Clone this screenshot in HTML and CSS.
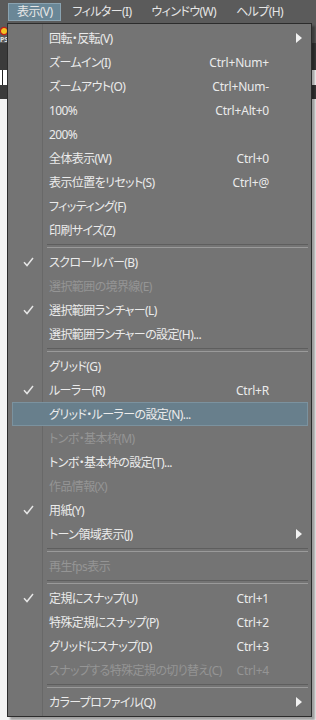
FILE: index.html
```html
<!DOCTYPE html>
<html lang="ja">
<head>
<meta charset="utf-8">
<title>表示メニュー</title>
<link rel="stylesheet" href="styles.css">
</head>
<body>
<div class="app">
  <div class="menubar">
    <div class="mb-item active">表示(V)</div>
    <div class="mb-item">フィルター(I)</div>
    <div class="mb-item">ウィンドウ(W)</div>
    <div class="mb-item">ヘルプ(H)</div>
  </div>
  <div class="workspace">
    <div class="toolstrip">
      <svg class="tool-icon" width="9" height="10" viewBox="0 0 9 10"><circle cx="4" cy="5" r="3.6" fill="#f3c322" stroke="#c0201a" stroke-width="1.2"/></svg>
      <span class="tool-label">PS</span>
    </div>
    <div class="band dark"></div>
    <div class="band white"><span class="vline"></span></div>
    <div class="band dark tall"></div>
    <div class="band rest"></div>
  </div>

  <div class="menu">
    <div class="row"><span class="chk"></span><span class="lbl">回転・反転(V)</span><span class="key"></span><span class="sub"><svg width="6" height="10" viewBox="0 0 6 10"><path d="M0 0 L6 5 L0 10 Z" fill="#f2f2f2"/></svg></span></div>
    <div class="row"><span class="chk"></span><span class="lbl">ズームイン(I)</span><span class="key">Ctrl+Num+</span><span class="sub"></span></div>
    <div class="row"><span class="chk"></span><span class="lbl">ズームアウト(O)</span><span class="key">Ctrl+Num-</span><span class="sub"></span></div>
    <div class="row"><span class="chk"></span><span class="lbl">100%</span><span class="key">Ctrl+Alt+0</span><span class="sub"></span></div>
    <div class="row"><span class="chk"></span><span class="lbl">200%</span><span class="key"></span><span class="sub"></span></div>
    <div class="row"><span class="chk"></span><span class="lbl">全体表示(W)</span><span class="key">Ctrl+0</span><span class="sub"></span></div>
    <div class="row"><span class="chk"></span><span class="lbl">表示位置をリセット(S)</span><span class="key">Ctrl+@</span><span class="sub"></span></div>
    <div class="row"><span class="chk"></span><span class="lbl">フィッティング(F)</span><span class="key"></span><span class="sub"></span></div>
    <div class="row"><span class="chk"></span><span class="lbl">印刷サイズ(Z)</span><span class="key"></span><span class="sub"></span></div>
    <div class="sep"></div>
    <div class="row"><span class="chk"><svg width="11" height="10" viewBox="0 0 11 10"><path d="M1 5.2 L4 8.5 L10 1" fill="none" stroke="#e6e6e6" stroke-width="1.5"/></svg></span><span class="lbl">スクロールバー(B)</span><span class="key"></span><span class="sub"></span></div>
    <div class="row off"><span class="chk"></span><span class="lbl">選択範囲の境界線(E)</span><span class="key"></span><span class="sub"></span></div>
    <div class="row"><span class="chk"><svg width="11" height="10" viewBox="0 0 11 10"><path d="M1 5.2 L4 8.5 L10 1" fill="none" stroke="#e6e6e6" stroke-width="1.5"/></svg></span><span class="lbl">選択範囲ランチャー(L)</span><span class="key"></span><span class="sub"></span></div>
    <div class="row"><span class="chk"></span><span class="lbl">選択範囲ランチャーの設定(H)...</span><span class="key"></span><span class="sub"></span></div>
    <div class="sep"></div>
    <div class="row"><span class="chk"></span><span class="lbl">グリッド(G)</span><span class="key"></span><span class="sub"></span></div>
    <div class="row"><span class="chk"><svg width="11" height="10" viewBox="0 0 11 10"><path d="M1 5.2 L4 8.5 L10 1" fill="none" stroke="#e6e6e6" stroke-width="1.5"/></svg></span><span class="lbl">ルーラー(R)</span><span class="key">Ctrl+R</span><span class="sub"></span></div>
    <div class="row hot"><span class="chk"></span><span class="lbl">グリッド・ルーラーの設定(N)...</span><span class="key"></span><span class="sub"></span></div>
    <div class="row off"><span class="chk"></span><span class="lbl">トンボ・基本枠(M)</span><span class="key"></span><span class="sub"></span></div>
    <div class="row"><span class="chk"></span><span class="lbl">トンボ・基本枠の設定(T)...</span><span class="key"></span><span class="sub"></span></div>
    <div class="row off"><span class="chk"></span><span class="lbl">作品情報(X)</span><span class="key"></span><span class="sub"></span></div>
    <div class="row"><span class="chk"><svg width="11" height="10" viewBox="0 0 11 10"><path d="M1 5.2 L4 8.5 L10 1" fill="none" stroke="#e6e6e6" stroke-width="1.5"/></svg></span><span class="lbl">用紙(Y)</span><span class="key"></span><span class="sub"></span></div>
    <div class="row"><span class="chk"></span><span class="lbl">トーン領域表示(J)</span><span class="key"></span><span class="sub"><svg width="6" height="10" viewBox="0 0 6 10"><path d="M0 0 L6 5 L0 10 Z" fill="#f2f2f2"/></svg></span></div>
    <div class="sep"></div>
    <div class="row off"><span class="chk"></span><span class="lbl">再生fps表示</span><span class="key"></span><span class="sub"></span></div>
    <div class="sep"></div>
    <div class="row"><span class="chk"><svg width="11" height="10" viewBox="0 0 11 10"><path d="M1 5.2 L4 8.5 L10 1" fill="none" stroke="#e6e6e6" stroke-width="1.5"/></svg></span><span class="lbl">定規にスナップ(U)</span><span class="key">Ctrl+1</span><span class="sub"></span></div>
    <div class="row"><span class="chk"></span><span class="lbl">特殊定規にスナップ(P)</span><span class="key">Ctrl+2</span><span class="sub"></span></div>
    <div class="row"><span class="chk"></span><span class="lbl">グリッドにスナップ(D)</span><span class="key">Ctrl+3</span><span class="sub"></span></div>
    <div class="row off"><span class="chk"></span><span class="lbl">スナップする特殊定規の切り替え(C)</span><span class="key">Ctrl+4</span><span class="sub"></span></div>
    <div class="sep"></div>
    <div class="row"><span class="chk"></span><span class="lbl">カラープロファイル(Q)</span><span class="key"></span><span class="sub"><svg width="6" height="10" viewBox="0 0 6 10"><path d="M0 0 L6 5 L0 10 Z" fill="#f2f2f2"/></svg></span></div>
  </div>
</div>
</body>
</html>
```
FILE: styles.css
```css
* { box-sizing: border-box; }
html, body { margin: 0; padding: 0; }
body {
  width: 316px;
  height: 720px;
  overflow: hidden;
  font-family: "Noto Sans", "Noto Sans CJK JP", sans-serif;
  font-size: 12px;
  font-feature-settings: "palt";
  background: #ffffff;
}
.app {
  position: relative;
  width: 316px;
  height: 720px;
}
.menubar {
  height: 23px;
  background: #5b5b5b;
  display: flex;
  align-items: center;
  padding-left: 8px;
  gap: 2px;
}
.mb-item {
  height: 18px;
  line-height: 16px;
  padding: 0 8px;
  border: 1px solid transparent;
  color: #e6e6e6;
  white-space: nowrap;
  letter-spacing: -0.6px;
}
.mb-item.active {
  background: #6a8797;
  border-color: #8aa3b1;
}
.workspace {
  display: flex;
  flex-direction: column;
  height: 697px;
}
.toolstrip {
  height: 20px;
  background: #5b5b5b;
  display: flex;
  flex-direction: column;
  padding-top: 3px;
}
.tool-icon { display: block; }
.tool-label {
  font-size: 7px;
  line-height: 7px;
  color: #e0e0e0;
  font-weight: bold;
}
.band.dark { height: 27px; background: #3b3b3b; }
.band.dark.tall { height: 14px; }
.band.white {
  height: 15px;
  background: #ffffff;
  display: flex;
}
.vline { width: 1px; margin-left: 2px; background: #222; }
.band.rest { flex: 1; background: #f4f4f4; }

.menu {
  position: absolute;
  top: 23px;
  left: 7px;
  width: 305px;
  padding: 2px 3px 2px 4px;
  border: 1px solid #2c2c2c;
  background:
    linear-gradient(to right, transparent 34px, #686868 34px, #686868 35px, transparent 35px),
    #747474;
  box-shadow: 3px 3px 2px rgba(0, 0, 0, 0.35);
  color: #ebebeb;
}
.row {
  height: 24px;
  display: grid;
  grid-template-columns: 30px 1fr auto 38px;
  align-items: center;
  border: 1px solid transparent;
  white-space: nowrap;
}
.row.hot {
  background: #687f8c;
  border-color: #7b929f;
}
.row.off { color: #959595; }
.chk {
  display: flex;
  justify-content: center;
  padding-left: 1px;
}
.chk svg { display: block; }
.lbl { padding-left: 6px; letter-spacing: -0.6px; }
.key { text-align: right; letter-spacing: -0.2px; }
.sub {
  display: flex;
  padding-left: 27px;
}
.sub svg { display: block; }
.sep {
  height: 8px;
  margin-left: 35px;
  display: flex;
  align-items: center;
}
.sep::before {
  content: "";
  display: block;
  width: 100%;
  height: 2px;
  border-top: 1px solid #5e5e5e;
  border-bottom: 1px solid #9a9a9a;
}
```
